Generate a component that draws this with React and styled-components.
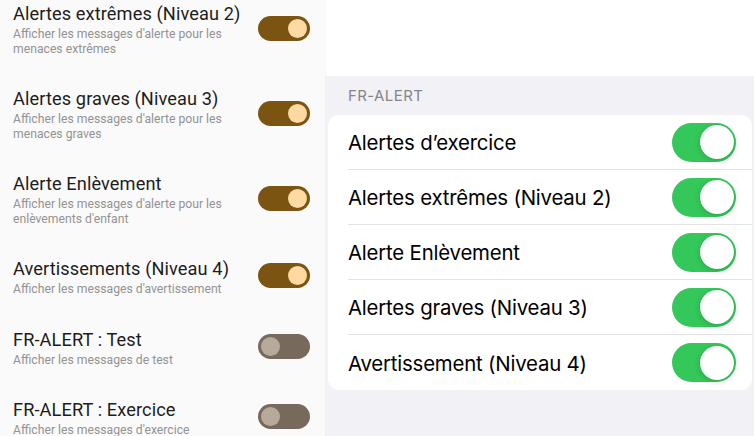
import React from "react";
import styled, { createGlobalStyle } from "styled-components";

const Global = createGlobalStyle`
  html, body { margin: 0; padding: 0; background: #ffffff; }
  #root { width: 754px; height: 436px; overflow: hidden; }
`;

const Page = styled.div`
  display: flex;
  width: 754px;
  height: 436px;
  overflow: hidden;
`;

/* ---------- Android (left) ---------- */
const AndroidPanel = styled.div`
  width: 325px;
  flex: none;
  background: #fafafa;
  overflow: hidden;
  font-family: Roboto, "Noto Sans", Arial, sans-serif;
`;

const AndroidList = styled.div`
  display: flex;
  flex-direction: column;
  margin-top: -13px;
`;

const AndroidRow = styled.div`
  display: flex;
  align-items: center;
  justify-content: space-between;
  padding: 16px 15px 16px 13px;
`;

const AndroidText = styled.div`
  display: flex;
  flex-direction: column;
  gap: 2px;
`;

const AndroidTitle = styled.div`
  font-size: 18.2px;
  line-height: 22px;
  color: #1d1d1d;
  letter-spacing: 0.1px;
`;

const AndroidSub = styled.div`
  font-size: 12.2px;
  line-height: 14.5px;
  color: #939393;
  white-space: pre-line;
`;

const AndroidTrack = styled.div`
  width: 52px;
  height: 25px;
  border-radius: 13px;
  flex: none;
  margin-bottom: 3px;
  display: flex;
  align-items: center;
  justify-content: ${(p) => (p.$on ? "flex-end" : "flex-start")};
  padding: 0 3px;
  box-sizing: border-box;
  background: ${(p) => (p.$on ? "#7b5412" : "#776a5c")};
`;

const AndroidKnob = styled.div`
  width: 19px;
  height: 19px;
  border-radius: 50%;
  background: ${(p) => (p.$on ? "#ffd9a2" : "#b8aa9a")};
`;

/* ---------- iOS (right) ---------- */
const IosPanel = styled.div`
  flex: 1;
  display: flex;
  flex-direction: column;
  font-family: Inter, "Liberation Sans", Arial, sans-serif;
`;

const IosTop = styled.div`
  height: 76px;
  background: #ffffff;
  border-left: 1px solid #f6f6f6;
`;

const IosGrouped = styled.div`
  flex: 1;
  background: #f2f1f6;
  padding: 11px 2px 0 3px;
`;

const SectionHeader = styled.div`
  font-size: 15px;
  line-height: 18px;
  color: #86858b;
  padding-left: 20px;
  margin-bottom: 10px;
  letter-spacing: 0.4px;
`;

const Card = styled.div`
  background: #ffffff;
  border-radius: 11px;
  overflow: hidden;
`;

const IosRow = styled.div`
  padding-left: 20px;
`;

const IosRowInner = styled.div`
  height: 55px;
  box-sizing: border-box;
  display: flex;
  align-items: center;
  justify-content: space-between;
  padding-right: 16px;
  border-bottom: ${(p) => (p.$last ? "none" : "1px solid #e3e3e6")};
`;

const IosLabel = styled.div`
  font-size: 20.4px;
  color: #000000;
  letter-spacing: -0.2px;
  padding-top: 1px;
`;

const IosTrack = styled.div`
  width: 64px;
  height: 39px;
  border-radius: 20px;
  background: #34c759;
  display: flex;
  align-items: center;
  justify-content: flex-end;
  padding: 0 2.5px;
  box-sizing: border-box;
  flex: none;
`;

const IosKnob = styled.div`
  width: 34px;
  height: 34px;
  border-radius: 50%;
  background: #ffffff;
  box-shadow: 0 2px 6px rgba(0, 0, 0, 0.15), 0 0 1px rgba(0, 0, 0, 0.1);
`;

const androidItems = [
  { t: "Alertes extrêmes (Niveau 2)", s: "Afficher les messages d'alerte pour les\nmenaces extrêmes", on: true },
  { t: "Alertes graves (Niveau 3)", s: "Afficher les messages d'alerte pour les\nmenaces graves", on: true },
  { t: "Alerte Enlèvement", s: "Afficher les messages d'alerte pour les\nenlèvements d'enfant", on: true },
  { t: "Avertissements (Niveau 4)", s: "Afficher les messages d'avertissement", on: true },
  { t: "FR-ALERT : Test", s: "Afficher les messages de test", on: false },
  { t: "FR-ALERT : Exercice", s: "Afficher les messages d'exercice", on: false },
];

const iosItems = [
  "Alertes d’exercice",
  "Alertes extrêmes (Niveau 2)",
  "Alerte Enlèvement",
  "Alertes graves (Niveau 3)",
  "Avertissement (Niveau 4)",
];

export default function App() {
  return (
    <>
      <Global />
      <Page>
        <AndroidPanel>
          <AndroidList>
            {androidItems.map((it) => (
              <AndroidRow key={it.t}>
                <AndroidText>
                  <AndroidTitle>{it.t}</AndroidTitle>
                  <AndroidSub>{it.s}</AndroidSub>
                </AndroidText>
                <AndroidTrack $on={it.on}>
                  <AndroidKnob $on={it.on} />
                </AndroidTrack>
              </AndroidRow>
            ))}
          </AndroidList>
        </AndroidPanel>
        <IosPanel>
          <IosTop />
          <IosGrouped>
            <SectionHeader>FR-ALERT</SectionHeader>
            <Card>
              {iosItems.map((label, i) => (
                <IosRow key={label}>
                  <IosRowInner $last={i === iosItems.length - 1}>
                    <IosLabel>{label}</IosLabel>
                    <IosTrack>
                      <IosKnob />
                    </IosTrack>
                  </IosRowInner>
                </IosRow>
              ))}
            </Card>
          </IosGrouped>
        </IosPanel>
      </Page>
    </>
  );
}
